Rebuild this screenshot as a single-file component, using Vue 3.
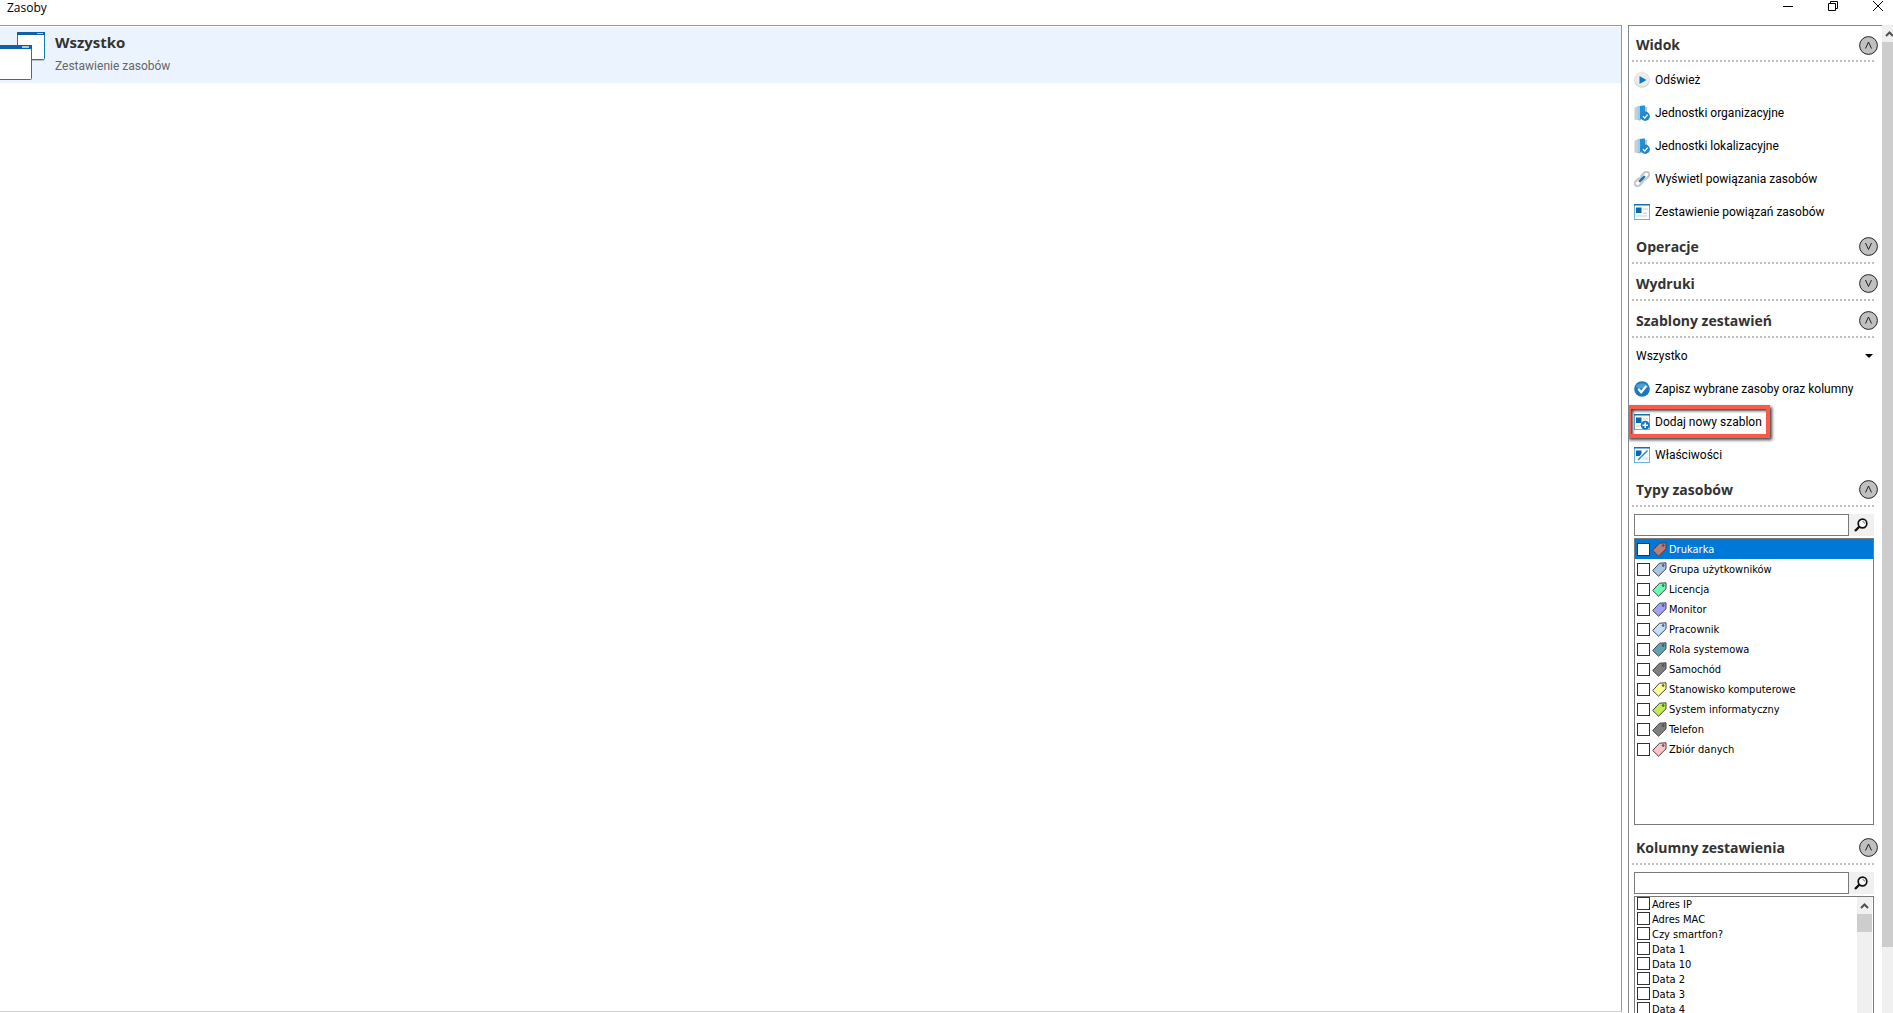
<template>
  <div class="window">
    <header class="title-bar">
      <h1>Zasoby</h1>
      <div class="window-buttons">
        <button type="button" aria-label="Minimalizuj">
          <svg width="12" height="12" viewBox="0 0 12 12"><path d="M1 6.5h10" /></svg>
        </button>
        <button type="button" aria-label="Przywróć">
          <svg width="12" height="12" viewBox="0 0 12 12">
            <path d="M1.5 3.5h7v7h-7zM3.5 3.5v-2h7v7h-2" />
          </svg>
        </button>
        <button type="button" aria-label="Zamknij">
          <svg width="12" height="12" viewBox="0 0 12 12"><path d="M1 1l10 10M11 1L1 11" /></svg>
        </button>
      </div>
    </header>

    <div class="content">
      <main class="report">
        <div class="report-header">
          <svg class="report-icon" width="45" height="48" viewBox="0 0 45 48">
            <rect x="17.5" y="0.5" width="27" height="27" rx="1" fill="#fff" stroke="#1b76b4" />
            <path d="M17 0h28v3H17z" fill="#0d62a5" />
            <path d="M37 1.5h6" stroke="#a9cbe3" />
            <path d="M32 28.5h12" stroke="#b9c3cf" />
            <rect x="-5.5" y="13.5" width="37" height="34" rx="1" fill="#fff" stroke="#1b76b4" />
            <path d="M0 13h32v4H0z" fill="#0d62a5" />
            <path d="M22 15h7" stroke="#a9cbe3" stroke-width="2" />
          </svg>
          <div>
            <h2>Wszystko</h2>
            <p>Zestawienie zasobów</p>
          </div>
        </div>
      </main>

      <aside class="sidebar">
        <div class="panels">
          <section v-for="panel in panels" :key="panel.id">
            <div class="panel-header">
              <h3>{{ panel.title }}</h3>
              <button
                type="button"
                class="toggle"
                :aria-label="panel.title"
                :aria-expanded="panel.open"
                @click="panel.open = !panel.open"
              >
                <svg width="19" height="19" viewBox="0 0 19 19">
                  <circle cx="9.5" cy="9.5" r="8.9" fill="#c0c0c0" stroke="#222" />
                  <path :d="panel.open ? 'M6.5 12.5l3-6.5 3 6.5' : 'M6.5 6l3 6.5 3-6.5'" fill="none" stroke="#222" />
                </svg>
              </button>
            </div>

            <template v-if="panel.open">
              <div v-if="panel.id === 'templates'" class="template-row">
                <select v-model="template" aria-label="Szablon zestawienia">
                  <option>Wszystko</option>
                </select>
                <svg class="select-arrow" width="8" height="4" viewBox="0 0 8 4"><path d="M0 0h8L4 4z" /></svg>
              </div>

              <ul v-if="panel.actions" class="actions">
                <li v-for="action in panel.actions" :key="action.label">
                  <button type="button" :class="['action', { marked: action.marked }]">
                    <svg width="16" height="16" viewBox="0 0 16 16">
                      <template v-if="action.icon === 'play'">
                        <circle cx="8" cy="8" r="7.8" fill="#d2d4d6" />
                        <circle cx="8" cy="7.5" r="7" fill="#ececec" />
                        <path d="M5.5 4l7 4-7 4z" fill="#0b7cc4" />
                      </template>
                      <template v-else-if="action.icon === 'units'">
                        <path d="M0.5 3l3.5-2v13l-3.5 0.8z" fill="#c9cdd1" />
                        <path d="M4 1l6-0.6V13L4 14.5z" fill="#8fd0f2" />
                        <path d="M6 1l5-0.6V13l-5 1z" fill="#2492d6" />
                        <path d="M11 1.5l2 0.8V8l-2-0.5z" fill="#c0c5ca" />
                        <path d="M1 14.5l5 1 2-1.5z" fill="#a4abb2" />
                        <circle cx="11.2" cy="11.2" r="4.7" fill="#2a86c6" />
                        <path d="M9 11.2l1.8 1.9 2.8-3.4" fill="none" stroke="#fff" stroke-width="1.3" />
                      </template>
                      <template v-else-if="action.icon === 'link'">
                        <g transform="rotate(-45 8 8)" fill="none" stroke="#c6c9cc" stroke-width="2.2">
                          <rect x="-1" y="5.2" width="8.5" height="5.6" rx="2.6" />
                          <rect x="8.5" y="5.2" width="8.5" height="5.6" rx="2.6" />
                          <path d="M4 8h8" stroke="#1674b8" stroke-width="2.4" />
                        </g>
                      </template>
                      <template v-else-if="action.icon === 'save'">
                        <circle cx="8" cy="8" r="7.8" fill="#1b79b9" />
                        <path d="M1.5 6a7 6 0 0113 0q-6 3-13 0z" fill="#4b9fd3" />
                        <path d="M4.2 7.8l3 3.4 5-6.2" fill="none" stroke="#fff" stroke-width="2.2" />
                      </template>
                      <template v-else>
                        <rect x="0.5" y="0.5" width="15" height="15" fill="#fafcfd" stroke="#68b4dc" />
                        <path d="M0 0h16v1.5H0z" fill="#1570ae" />
                        <path d="M2 3.5h5.5V9H2z" fill="#0d67ad" />
                        <g v-if="action.icon === 'window'">
                          <path d="M9 4h5v2H9zM9 8h4v2H9zM2 11h11v2H2z" fill="#e4e7ea" />
                        </g>
                        <g v-else-if="action.icon === 'add'">
                          <path d="M9 4h5v2H9zM2 11h4v2H2z" fill="#e4e7ea" />
                          <circle cx="11.2" cy="11.2" r="4.4" fill="#1674b8" />
                          <path d="M11.2 8.4V14M8.4 11.2H14" stroke="#fff" stroke-width="1.4" />
                        </g>
                        <g v-else>
                          <path d="M9 10h5v3H9z" fill="#e4e7ea" />
                          <path d="M3 14L13.5 3.5" stroke="#fff" stroke-width="3.5" />
                          <path d="M4 13l9.5-9.5" stroke="#2287c9" stroke-width="1.5" />
                        </g>
                      </template>
                    </svg>
                    <span>{{ action.label }}</span>
                  </button>
                </li>
              </ul>

              <div v-if="panel.items" class="picker">
                <form class="search" @submit.prevent>
                  <input v-model="panel.query" type="text" :aria-label="'Szukaj: ' + panel.title" />
                  <button type="submit" aria-label="Szukaj">
                    <svg width="14" height="14" viewBox="0 0 14 14">
                      <circle cx="8.5" cy="5.5" r="4.3" fill="#fff" stroke="#111" stroke-width="1.7" />
                      <path d="M5.5 8.5L1 13" stroke="#111" stroke-width="2.4" />
                      <path d="M8.5 3.5a2 2 0 012 2" fill="none" stroke="#777" />
                    </svg>
                  </button>
                </form>
                <div :class="['list-box', panel.id]">
                  <ul>
                    <li v-for="item in panel.items" :key="item.label" :class="{ selected: item.selected }">
                      <label>
                        <input v-model="item.checked" type="checkbox" />
                        <svg v-if="item.color" width="15" height="15" viewBox="0 0 15 15">
                          <path
                            d="M0.7 8.5L7.5 1.2 14 0.8V6.8L6.5 14.2z"
                            :fill="item.color"
                            stroke="#444"
                            stroke-linejoin="round"
                          />
                          <circle cx="11.2" cy="3.5" r="1" fill="#666" stroke="#333" stroke-width="0.5" />
                        </svg>
                        <span>{{ item.label }}</span>
                      </label>
                    </li>
                  </ul>
                  <div v-if="panel.id === 'columns'" class="list-scroll">
                    <svg width="9" height="6" viewBox="0 0 9 6"><path d="M1 5l3.5-3.5L8 5" /></svg>
                    <div class="list-thumb"></div>
                  </div>
                </div>
              </div>
            </template>
          </section>
        </div>
        <div class="page-scroll">
          <svg width="9" height="6" viewBox="0 0 9 6"><path d="M1 5l3.5-3.5L8 5" /></svg>
          <div class="page-thumb"></div>
        </div>
      </aside>
    </div>
  </div>
</template>

<script setup>
import { ref, reactive } from 'vue'

const template = ref('Wszystko')

const types = [
  ['Drukarka', '#bd7b7b'],
  ['Grupa użytkowników', '#a9c4e4'],
  ['Licencja', '#6dfcb4'],
  ['Monitor', '#a3a0fc'],
  ['Pracownik', '#c4dffc'],
  ['Rola systemowa', '#5fa3b3'],
  ['Samochód', '#7f7f7f'],
  ['Stanowisko komputerowe', '#fdfd96'],
  ['System informatyczny', '#c3ea52'],
  ['Telefon', '#7f7f7f'],
  ['Zbiór danych', '#fcc4c4']
]

const columns = ['Adres IP', 'Adres MAC', 'Czy smartfon?', 'Data 1', 'Data 10', 'Data 2', 'Data 3', 'Data 4']

const panels = reactive([
  {
    id: 'view',
    title: 'Widok',
    open: true,
    actions: [
      { label: 'Odśwież', icon: 'play' },
      { label: 'Jednostki organizacyjne', icon: 'units' },
      { label: 'Jednostki lokalizacyjne', icon: 'units' },
      { label: 'Wyświetl powiązania zasobów', icon: 'link' },
      { label: 'Zestawienie powiązań zasobów', icon: 'window' }
    ]
  },
  { id: 'operations', title: 'Operacje', open: false },
  { id: 'prints', title: 'Wydruki', open: false },
  {
    id: 'templates',
    title: 'Szablony zestawień',
    open: true,
    actions: [
      { label: 'Zapisz wybrane zasoby oraz kolumny', icon: 'save' },
      { label: 'Dodaj nowy szablon', icon: 'add', marked: true },
      { label: 'Właściwości', icon: 'edit' }
    ]
  },
  {
    id: 'types',
    title: 'Typy zasobów',
    open: true,
    query: '',
    items: types.map(([label, color], i) => ({ label, color, checked: false, selected: i === 0 }))
  },
  {
    id: 'columns',
    title: 'Kolumny zestawienia',
    open: true,
    query: '',
    items: columns.map((label) => ({ label, checked: false }))
  }
])
</script>

<style>
body {
  margin: 0;
  overflow: hidden;
  background: #fff;
}
</style>

<style scoped>
.window {
  display: flex;
  flex-direction: column;
  height: 100vh;
  overflow: hidden;
  color: #000;
  font-family: 'Segoe UI', Roboto, 'Open Sans', sans-serif;
  font-size: 12px;
}

h1,
h2,
h3,
p,
ul {
  margin: 0;
  padding: 0;
}

h1,
h2,
h3 {
  font-family: 'Segoe UI', 'Open Sans', 'Noto Sans', sans-serif;
}

ul {
  list-style: none;
}

svg {
  display: block;
  flex: none;
}

button {
  padding: 0;
  border: none;
  background: none;
  color: inherit;
  font: inherit;
}

.title-bar {
  display: flex;
  flex: none;
  justify-content: space-between;
  height: 25px;
}

.title-bar h1 {
  padding-left: 7px;
  font-size: 12px;
  font-weight: 400;
  line-height: 16px;
}

.window-buttons {
  display: flex;
  align-items: flex-start;
  gap: 33px;
  padding-right: 9px;
}

.window-buttons svg {
  fill: none;
  stroke: #000;
}

.content {
  display: flex;
  flex: 1;
  min-height: 0;
}

.report {
  flex: 1;
  margin-right: 6px;
  margin-bottom: 1px;
  border: 1px solid #8a9aac;
  border-left: none;
  border-bottom-color: #d0d0d0;
}

.report-header {
  display: flex;
  gap: 10px;
  height: 51px;
  padding-top: 5px;
  margin-top: 1px;
  background: #ebf3fe;
}

.report-header h2 {
  color: #333;
  font-size: 15px;
  line-height: 20px;
}

.report-header p {
  margin-top: 4px;
  color: #666;
  line-height: 20px;
}

.sidebar {
  display: flex;
  flex: none;
  width: 265px;
}

.panels {
  flex: 1;
  overflow: hidden;
  border-top: 1px solid #828790;
  border-left: 1px solid #828790;
}

.panel-header {
  display: flex;
  align-items: center;
  justify-content: space-between;
  height: 37px;
  padding: 2px 4px 0 7px;
  box-sizing: border-box;
  background: repeating-linear-gradient(90deg, #c0c0c0 0 2px, transparent 2px 4px) 3px 100% / 242px 2px no-repeat;
}

.panels section:first-child .panel-header {
  height: 36px;
}

.panel-header h3 {
  color: #333;
  font-size: 14px;
  line-height: 20px;
}

.template-row {
  position: relative;
  height: 33px;
  padding: 2px 8px 0 7px;
  box-sizing: border-box;
}

.template-row select {
  width: 100%;
  height: 31px;
  padding: 0;
  border: none;
  appearance: none;
  background: none;
  color: inherit;
  font: inherit;
}

.select-arrow {
  position: absolute;
  top: 16px;
  right: 9px;
}

.actions li {
  height: 33px;
  padding: 2px 0 0 5px;
  box-sizing: border-box;
}

.action {
  display: flex;
  align-items: center;
  gap: 5px;
  height: 31px;
  white-space: nowrap;
}

.marked {
  position: relative;
}

.marked::after {
  content: '';
  position: absolute;
  inset: -1px -8px -1px -7px;
  border: 4px solid #fb5a4b;
  box-shadow: 2px 2px 3px #444, inset 2px 2px 3px #444;
}

.picker {
  padding: 7px 8px 3px 5px;
}

.search {
  display: flex;
  background: #f0f0f0;
}

.search input {
  flex: 1;
  min-width: 0;
  height: 22px;
  padding: 0 4px;
  border: 1px solid #7a7a7a;
  box-sizing: border-box;
  background: #fff;
}

.search button {
  width: 25px;
  padding: 4px 0 4px 5px;
}

.list-box {
  display: flex;
  height: 287px;
  margin-top: 2px;
  border: 1px solid #7a7a7a;
  box-sizing: border-box;
  font-family: Tahoma, 'DejaVu Sans Condensed', 'Noto Sans', sans-serif;
  font-size: 11px;
}

.list-box ul {
  flex: 1;
}

.list-box label {
  display: flex;
  align-items: center;
  gap: 2px;
  height: 20px;
  padding-left: 2px;
}

.list-box input {
  width: 13px;
  height: 13px;
  margin: 0;
  border: 1px solid #333;
  appearance: none;
  background: #fff;
}

.list-box input:checked {
  background: #0078d7;
}

.columns label {
  align-items: flex-start;
  height: 15px;
  line-height: 16px;
}

.selected {
  background: #0078d7;
  color: #fff;
}

.list-scroll,
.page-scroll {
  display: flex;
  flex-direction: column;
  align-items: center;
  background: #f0f0f0;
}

.list-scroll {
  width: 15px;
  margin-right: 1px;
}

.page-scroll {
  width: 11px;
  overflow: hidden;
}

.list-scroll svg,
.page-scroll svg {
  margin: 6px 0 5px;
  fill: none;
  stroke: #505050;
  stroke-width: 2;
}

.page-scroll svg {
  align-self: flex-start;
  margin-left: 3px;
}

.list-thumb,
.page-thumb {
  width: 100%;
  background: #cdcdcd;
}

.list-thumb {
  height: 18px;
}

.page-thumb {
  height: calc(100% - 83px);
}
</style>
